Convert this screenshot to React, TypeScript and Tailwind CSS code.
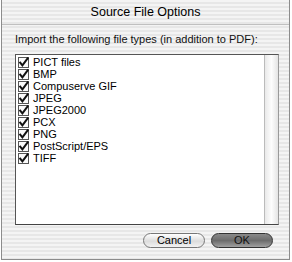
const FILE_TYPES = [
  "PICT files",
  "BMP",
  "Compuserve GIF",
  "JPEG",
  "JPEG2000",
  "PCX",
  "PNG",
  "PostScript/EPS",
  "TIFF",
];

const stripes =
  "bg-[repeating-linear-gradient(to_bottom,#f4f4f4_0px,#f4f4f4_2px,#e7e7e7_2px,#e7e7e7_4px)]";

function CheckBox() {
  return (
    <svg width="11" height="11" viewBox="0 0 11 11" className="shrink-0">
      <rect x="0.5" y="0.5" width="10" height="10" fill="#fafafa" stroke="#555" />
      <path d="M2.2 5.6 L4.4 8.4 L9.6 1.4" fill="none" stroke="#111" strokeWidth="2" strokeLinecap="square" />
    </svg>
  );
}

export default function App() {
  return (
    <div className="h-[262px] w-[292px] bg-white pl-px pr-[2px] pb-[2px] font-['Liberation_Sans',sans-serif] text-black">
      <div className={`flex h-full flex-col border border-t-0 border-[#8c8c8c] ${stripes}`}>
        <div className="flex h-[25px] items-center justify-center border-b border-[#c0c0c0] text-[12.5px]">
          Source File Options
        </div>

        <p className="mt-[8px] pl-[13px] text-[11px] leading-[13px] text-[#111]">
          Import the following file types (in addition to PDF):
        </p>

        <div className="ml-[13px] mt-[8px] flex h-[171px] w-[264px] border border-[#555] border-r-[#999] border-b-[#444] bg-white">
          <ul className="flex-1 pl-[2px] pt-[1px]">
            {FILE_TYPES.map((name) => (
              <li key={name} className="flex h-[12px] items-center gap-[4px] text-[11px]">
                <CheckBox />
                <span>{name}</span>
              </li>
            ))}
          </ul>
          <div className="w-[14px] border-l border-[#bbb] bg-[linear-gradient(to_right,#e9e9e9,#fdfdfd_50%,#e4e4e4)]" />
        </div>

        <div className="mt-[8px] flex justify-end gap-[6px] pr-[16px]">
          <button className="h-[15px] w-[62px] rounded-full border border-[#777] bg-[linear-gradient(to_bottom,#ffffff,#dcdcdc_55%,#f2f2f2)] text-[11px] leading-[13px]">
            Cancel
          </button>
          <button className="h-[15px] w-[62px] rounded-full border border-[#333] bg-[linear-gradient(to_bottom,#8a8a8a,#6c6c6c_50%,#a0a0a0)] text-[11px] leading-[13px] text-[#111]">
            OK
          </button>
        </div>
      </div>
    </div>
  );
}
